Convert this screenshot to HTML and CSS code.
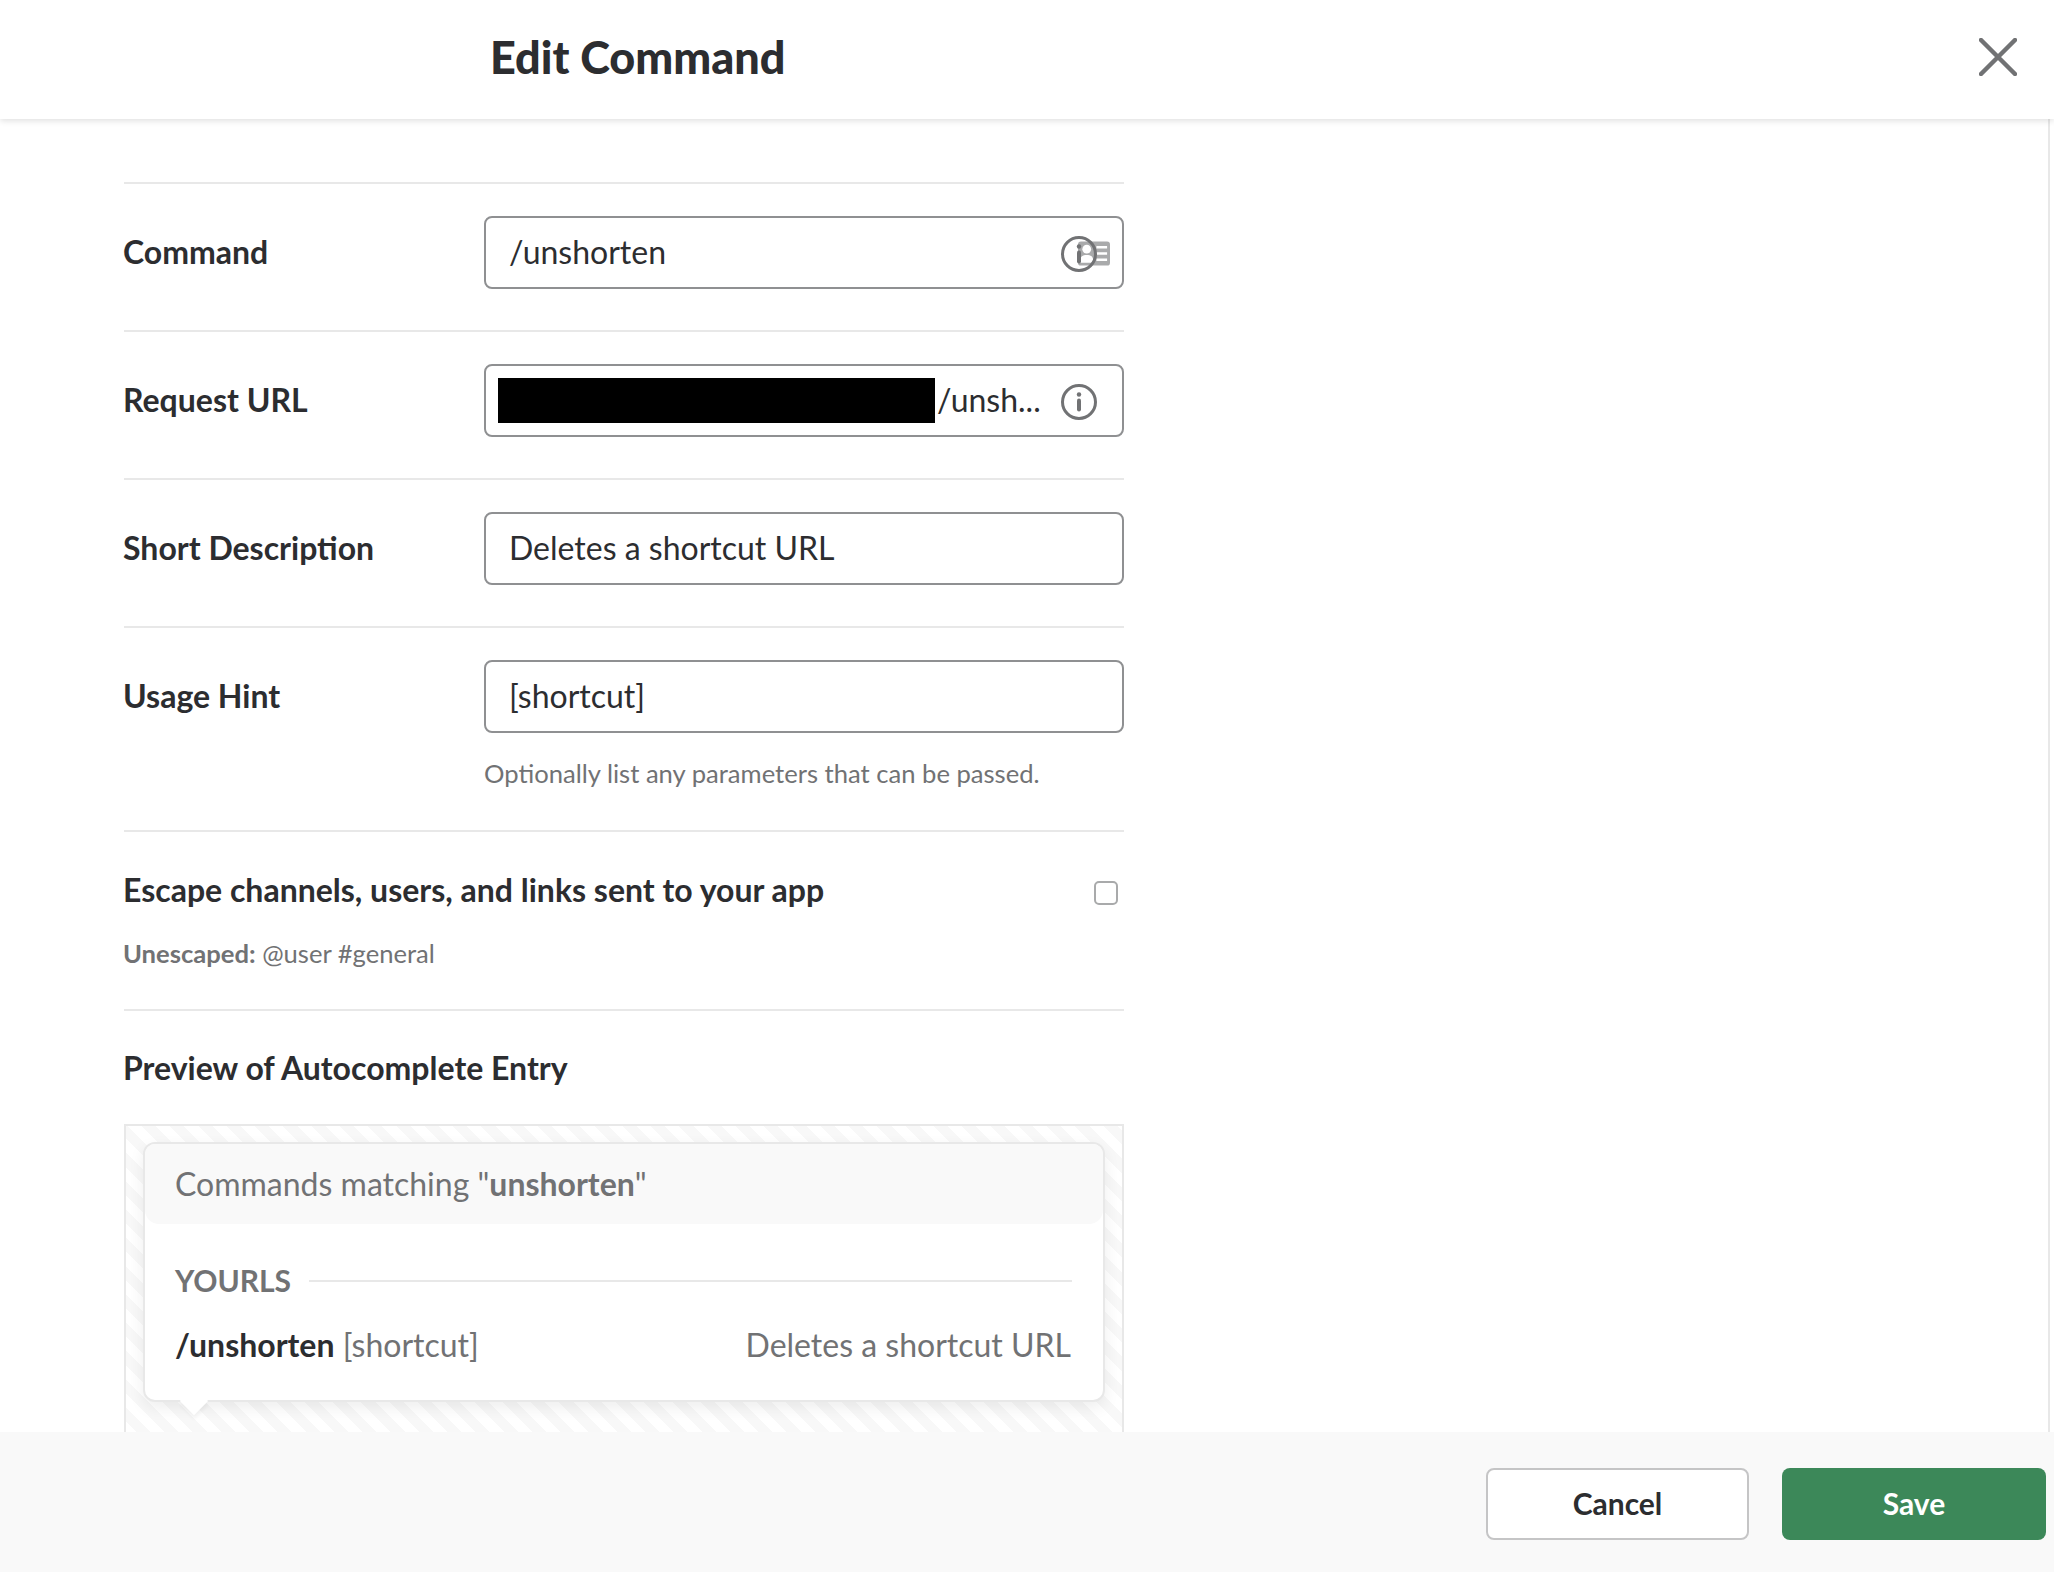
FILE: index.html
```html
<!DOCTYPE html>
<html lang="en">
<head>
    <meta charset="UTF-8">
    <title>Edit Command</title>
    <link rel="stylesheet" href="styles.css">
</head>
<body>
    <div class="modal">
        <header class="modal-header">
            <h1>Edit Command</h1>
            <button class="close" aria-label="Close">
                <svg width="38" height="38" viewBox="0 0 38 38"><path d="M2 2 36 36M36 2 2 36"/></svg>
            </button>
        </header>

        <main class="modal-body">
            <form class="form">
                <div class="row">
                    <label class="row-label">Command</label>
                    <div class="field">
                        <input class="input" type="text" value="/unshorten">
                        <svg class="card-icon" width="32" height="25" viewBox="0 0 33 25">
                            <rect width="33" height="25" rx="3" fill="#a9aaab"/>
                            <path d="M19 6h11M19 12.5h11M19 19h11" stroke="#fff" stroke-width="2.5"/>
                            <circle cx="9" cy="8" r="4.5" fill="#fff"/>
                            <path d="M2 22c0-7 3-8 7-8s7 1 7 8z" fill="#fff"/>
                        </svg>
                        <svg class="info-icon" width="38" height="38" viewBox="0 0 38 38">
                            <circle cx="19" cy="19" r="16.5"/>
                            <path d="M19 17.5v9"/>
                            <circle class="dot" cx="19" cy="11.5" r="2.2"/>
                        </svg>
                    </div>
                </div>

                <div class="row">
                    <label class="row-label">Request URL</label>
                    <div class="field">
                        <div class="input url-input"><span class="redacted"></span><span>/unsh...</span></div>
                        <svg class="info-icon" width="38" height="38" viewBox="0 0 38 38">
                            <circle cx="19" cy="19" r="16.5"/>
                            <path d="M19 17.5v9"/>
                            <circle class="dot" cx="19" cy="11.5" r="2.2"/>
                        </svg>
                    </div>
                </div>

                <div class="row">
                    <label class="row-label">Short Description</label>
                    <div class="field">
                        <input class="input" type="text" value="Deletes a shortcut URL">
                    </div>
                </div>

                <div class="row row-hint">
                    <label class="row-label">Usage Hint</label>
                    <div class="field">
                        <input class="input" type="text" value="[shortcut]">
                    </div>
                    <p class="hint">Optionally list any parameters that can be passed.</p>
                </div>

                <div class="row-escape">
                    <div class="escape-top">
                        <label class="row-label escape-label">Escape channels, users, and links sent to your app</label>
                        <input class="checkbox" type="checkbox">
                    </div>
                    <p class="escape-note"><b>Unescaped:</b> @user #general</p>
                </div>

                <div class="preview">
                    <h2 class="row-label preview-title">Preview of Autocomplete Entry</h2>
                    <div class="preview-box">
                        <div class="popup">
                            <div class="popup-head">Commands matching "<b>unshorten</b>"</div>
                            <div class="popup-group">
                                <span>YOURLS</span>
                                <i class="group-line"></i>
                            </div>
                            <div class="popup-item">
                                <span><b>/unshorten</b> [shortcut]</span>
                                <span>Deletes a shortcut URL</span>
                            </div>
                            <span class="popup-arrow"></span>
                        </div>
                    </div>
                </div>
            </form>
        </main>

        <footer class="modal-footer">
            <button class="btn btn-cancel">Cancel</button>
            <button class="btn btn-save">Save</button>
        </footer>
    </div>
</body>
</html>
```

FILE: styles.css
```css
* {
  box-sizing: border-box;
}

html, body {
  margin: 0;
  height: 100%;
}

body {
  font-family: Lato, "Open Sans", sans-serif;
  color: #2c2d30;
  background: #fff;
}

.modal {
  height: 1572px;
  display: flex;
  flex-direction: column;
  overflow: hidden;
}

.modal-header {
  height: 119px;
  flex: none;
  display: flex;
  align-items: center;
  justify-content: space-between;
  padding: 0 37px 5px 490px;
  background: #fff;
  box-shadow: 0 2px 6px rgba(0, 0, 0, 0.12);
  position: relative;
  z-index: 1;
}

.modal-header h1 {
  margin: 0;
  font-size: 45px;
  font-weight: 900;
}

.close {
  padding: 0;
  border: none;
  background: none;
  display: flex;
}

.close path {
  fill: none;
  stroke: #717274;
  stroke-width: 4.5;
  stroke-linecap: round;
}

.modal-body {
  flex: 1;
  min-height: 0;
  overflow: hidden;
  padding: 63px 0 0 124px;
  border-right: 2px solid #e8e8e8;
  margin-right: 4px;
}

.form {
  width: 1000px;
}

.row {
  display: grid;
  grid-template-columns: 360px 640px;
  align-items: center;
  border-top: 2px solid #e8e8e8;
  padding: 32px 0 41px;
}

.row-label {
  font-size: 32px;
  font-weight: 700;
  padding-bottom: 2px;
  margin-left: -1px;
}

.field {
  position: relative;
}

.input {
  display: block;
  width: 100%;
  height: 73px;
  padding: 0 23px 2px;
  border: 2px solid #8f9092;
  border-radius: 8px;
  background: #fff;
  font-family: inherit;
  font-size: 32px;
  color: #2c2d30;
}

.url-input {
  display: flex;
  align-items: center;
  padding: 0 12px 2px;
  gap: 2px;
}

.redacted {
  width: 437px;
  height: 45px;
  background: #000;
  margin-bottom: -2px;
}

.info-icon {
  position: absolute;
  top: 19px;
  right: 26px;
  fill: none;
  stroke: #717274;
  stroke-width: 3;
}

.info-icon path {
  stroke-width: 4;
  stroke-linecap: round;
}

.info-icon .dot {
  fill: #717274;
  stroke: none;
}

.card-icon {
  position: absolute;
  top: 25px;
  right: 14px;
}

.row-hint {
  padding-bottom: 42px;
}

.hint {
  grid-column: 2;
  margin: 25px 0 0;
  font-size: 25.6px;
  color: #717274;
}

.row-escape {
  border-top: 2px solid #e8e8e8;
  padding: 38px 0 41px;
}

.escape-top {
  display: flex;
  align-items: center;
  justify-content: space-between;
  padding-right: 6px;
}

.escape-label {
  line-height: 40px;
  padding-bottom: 4px;
}

.checkbox {
  appearance: none;
  width: 24px;
  height: 24px;
  margin: 1px 0 0;
  border: 2px solid #a9aaab;
  border-radius: 5px;
  background: #fff;
}

.escape-note {
  margin: 24px 0 0 -1px;
  font-size: 25.6px;
  color: #717274;
}

.preview {
  border-top: 2px solid #e8e8e8;
  padding-top: 37px;
}

.preview-title {
  margin: 0 0 32px -1px;
  padding-bottom: 4px;
  line-height: 40px;
}

.preview-box {
  height: 340px;
  padding: 16px 17px;
  border: 2px solid #e8e8e8;
  border-bottom: none;
  background: repeating-linear-gradient(45deg, #fff 0 10px, #f8f8f8 10px 20px);
}

.popup {
  position: relative;
  height: 260px;
  border: 2px solid #e8e8e8;
  border-radius: 12px;
  background: #fff;
  box-shadow: 0 6px 16px rgba(0, 0, 0, 0.07);
  font-size: 32px;
  color: #717274;
}

.popup-head {
  height: 80px;
  display: flex;
  align-items: center;
  padding: 0 30px 2px;
  white-space: pre;
  background: #f9f9f9;
  border-radius: 10px 10px 14px 14px;
}

.popup-group {
  display: flex;
  align-items: center;
  gap: 18px;
  padding: 38px 31px 0 30px;
  font-weight: 700;
  font-size: 30px;
}

.group-line {
  flex: 1;
  height: 2px;
  background: #e8e8e8;
  margin-top: 2px;
}

.popup-item {
  display: flex;
  justify-content: space-between;
  padding: 27px 32px 0 30px;
}

.popup-item b {
  color: #2c2d30;
}

.popup-arrow {
  position: absolute;
  left: 39px;
  bottom: -11px;
  width: 20px;
  height: 20px;
  background: #fff;
  transform: rotate(45deg);
  box-shadow: 3px 3px 4px rgba(0, 0, 0, 0.04);
}

.modal-footer {
  height: 140px;
  flex: none;
  display: flex;
  justify-content: flex-end;
  gap: 33px;
  padding: 36px 8px 0 0;
  background: #f9f9f9;
  position: relative;
}

.btn {
  width: 264px;
  height: 72px;
  padding: 0 0 3px;
  border-radius: 8px;
  font-family: inherit;
  font-size: 30px;
  font-weight: 700;
}

.btn-cancel {
  width: 263px;
  border: 2px solid #c5c5c6;
  background: #fff;
  color: #2c2d30;
}

.btn-save {
  border: none;
  background: #3c8859;
  color: #fff;
}
```
